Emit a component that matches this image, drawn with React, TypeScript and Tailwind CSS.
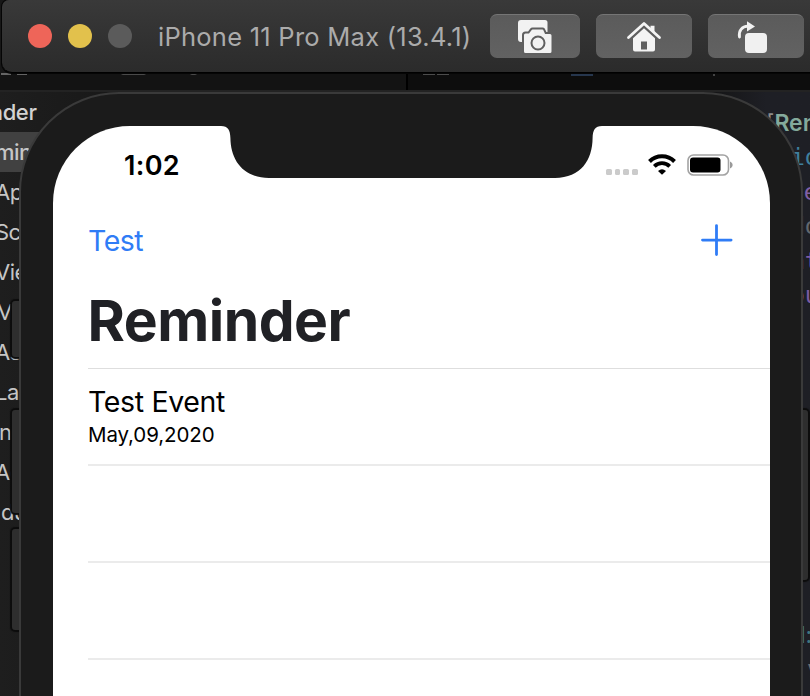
import type { ReactNode } from "react";

const files = ["Ap", "Sc", "Vie", "M", "As", "La", "n", "Ac"];

const codeLines = [
  { text: "io", style: "text-[#3f7f9f] pl-[31px]" },
  { text: "le", style: "text-[#8160a5] pl-[30px]" },
  { text: "do", style: "text-[#62676e] pl-[31px]" },
  { text: "at", style: "text-[#7d5ba3] pl-[31px]" },
  { text: "ou", style: "text-[#7d5ba3] pl-[31px]" },
];

function Editor() {
  return (
    <div className="flex h-full flex-col">
      <div className="flex h-[90px] shrink-0 items-end">
        <div className="flex h-[17px] w-[406px] bg-[#131313]">
          <div className="ml-[1px] h-[2px] w-[10px] bg-[#656565]" />
          <div className="ml-[6px] h-[2px] w-[10px] bg-[#656565]" />
          <div className="ml-[55px] h-[1px] w-[3px] bg-[#444]" />
          <div className="ml-[36px] h-[2px] w-[25px] rounded-b bg-[#4a4a4a]" />
          <div className="ml-[44px] h-[2px] w-[7px] rounded-b bg-[#4a4a4a]" />
        </div>
        <div className="h-[17px] w-[2px] bg-black" />
        <div className="flex h-[17px] flex-1 bg-[#0d0d0d]">
          <div className="ml-[15px] h-[2px] w-[12px] bg-[#4c4c4c]" />
          <div className="ml-[2px] h-[2px] w-[12px] bg-[#4c4c4c]" />
          <div className="ml-[122px] h-[3px] w-[22px] bg-[#26364d]" />
          <div className="ml-[120px] h-[3px] w-[2px] bg-[#444]" />
          <div className="ml-[17px] h-[1px] w-[29px] bg-[#51431e]" />
        </div>
      </div>
      <div className="h-[2px] shrink-0 bg-[#232323]" />
      <div className="flex flex-1 justify-between">
        <div className="w-[200px] bg-linear-to-r from-[#1e1e1e] to-[#141414] text-[22px] leading-[40px] tracking-[-0.5px] text-[#c6c6c6]">
          <div className="flex h-[40px] w-[36.5px] justify-end font-medium tracking-[-0.4px] text-[#d2d2d2]">nder</div>
          <div className="-ml-[5px] h-[40px] bg-[#414141] font-medium tracking-[-0.6px]">min</div>
          <div className="-ml-[5px]">
            {files.map((name) => (
              <div key={name} className={name === "n" ? "h-[40px] pl-[4px]" : "h-[40px]"}>{name}</div>
            ))}
          </div>
          <div className="h-[40px] pl-px">du</div>
        </div>
        <div className="flex w-[110px] flex-col overflow-hidden whitespace-nowrap bg-linear-to-r from-[#131313] to-[#1e1f25] to-60% pt-[14px] pl-[60px] font-['DejaVu_Sans_Mono',monospace] text-[23px]">
          <div className="flex h-[34px] items-center font-['Inter',sans-serif] leading-[34px]">
            <span className="w-[17px] pl-[6px] text-[#8b8b8b]">[</span>
            <span className="font-semibold text-[#84aa9c]">Ren</span>
          </div>
          {codeLines.map((line, i) => (
            <div key={i} className={`h-[34.5px] leading-[34px] ${line.style}`}>{line.text}</div>
          ))}
          <div className="mt-[305px] h-[34px] pl-[40px] font-['Inter',sans-serif] leading-[34px] text-[#3f7482]">l:</div>
          <div className="h-[34px] pl-[47px] leading-[34px] text-[#707070]">v</div>
        </div>
      </div>
    </div>
  );
}

function ToolButton({ wide, children }: { wide: boolean; children: ReactNode }) {
  return (
    <button
      className={`flex h-[44px] shrink-0 items-center justify-center rounded-[7px] border-t border-[#757575] bg-linear-to-b from-[#5b5b5b] to-[#626262] ${
        wide ? "w-[96px]" : "w-[90px]"
      }`}
    >
      {children}
    </button>
  );
}

function TitleBar() {
  return (
    <div className="flex h-[73px] items-center rounded-bl-[10px] rounded-tl-[7px] border-b border-black bg-linear-to-b from-[#393939] to-[#2b2b2b] pl-[26px] shadow-[0_0_0_1px_#050505]">
      <div className="flex gap-[16px]">
        <div className="size-[24px] rounded-full bg-[#ee6559]" />
        <div className="size-[24px] rounded-full bg-[#e2c14c]" />
        <div className="size-[24px] rounded-full bg-[#5b5b5b]" />
      </div>
      <div className="w-[358px] shrink-0 whitespace-nowrap pl-[26px] pt-[1px] text-[25.5px] leading-[32px] tracking-[0.25px] text-[#ababab]">
        iPhone 11 Pro Max (13.4.1)
      </div>
      <div className="flex gap-[16px]">
        <ToolButton wide={false}>
          <svg className="h-[36px] w-[36px]" viewBox="0 0 36 36" fill="none">
            <path d="M4 1h24a2.500 2.500 0 0 1 2.500 2.500V20a3 3 0 0 1-3 3H4a3 3 0 0 1-3-3V4a3 3 0 0 1 3-3Z" fill="#f2f2f2" />
            <path d="M8.500 13.500h3l2.400-3.100a2 2 0 0 1 1.600-.8h10a2 2 0 0 1 1.600.8l1.600 3.600H33a2.500 2.500 0 0 1 2.500 2.500v16a2.500 2.500 0 0 1-2.500 2.500H8.500A2.500 2.500 0 0 1 6 32.500V16a2.500 2.500 0 0 1 2.500-2.500Z" fill="#f2f2f2" stroke="#5f5f5f" strokeWidth="2" />
            <circle cx="21" cy="24" r="6.500" stroke="#5f5f5f" strokeWidth="2" />
          </svg>
        </ToolButton>
        <ToolButton wide>
          <svg className="h-[32px] w-[36px]" viewBox="0 0 36 32" fill="none">
            <path d="M24.500 9V4.700h4V13" fill="#f4f4f4" />
            <path d="M2.500 16.500 18 2.500l15.500 14" stroke="#f4f4f4" strokeWidth="2.800" strokeLinecap="round" strokeLinejoin="round" />
            <path fillRule="evenodd" d="M18 7.300 29 17.200v11.300a2 2 0 0 1-2 2H9a2 2 0 0 1-2-2V17.200L18 7.300Zm-3 13.200v8h6v-8h-6Z" fill="#f4f4f4" />
          </svg>
        </ToolButton>
        <ToolButton wide>
          <svg className="-ml-[8px] h-[34px] w-[32px]" viewBox="0 0 32 34" fill="none">
            <path d="M3.500 17C2.300 10.500 6 6.500 12 6.200" stroke="#f2f2f2" strokeWidth="2.800" strokeLinecap="round" />
            <path d="M11 1.200v10.400l8-5.200L11 1.200Z" fill="#f2f2f2" />
            <rect x="9" y="13" width="22" height="20" rx="4" fill="#f0f0f0" />
          </svg>
        </ToolButton>
      </div>
    </div>
  );
}

function StatusBar() {
  return (
    <div className="flex h-[52px]">
      <div className="w-[168px] shrink-0 pl-[71px] pt-[23px] text-[27px] font-semibold leading-[34px] tracking-[0.3px] text-black">
        1:02
      </div>
      <svg className="h-[52px] w-[381px] shrink-0" viewBox="0 0 381 52">
        <path d="M0 0C7 0 9.200 4 9.400 12C9.600 34 22 51.800 48 52H334C360 51.800 371.400 34 371.600 12C371.800 4 374 0 381 0Z" fill="#1b1b1b" />
      </svg>
      <div className="flex items-start pl-[4px] pt-[28px]">
        <div className="mt-[15px] flex gap-[3px]">
          {[0, 1, 2, 3].map((n) => (
            <div key={n} className="size-[5.7px] rounded-[1.5px] bg-[#cbcbcb]" />
          ))}
        </div>
        <svg className="ml-[10.5px] h-[21px] w-[28px] shrink-0" viewBox="0 0 28 21" fill="none">
          <path d="M1.500 7.500a17.500 17.500 0 0 1 25 0" stroke="#000" strokeWidth="4" />
          <path d="M6.300 12.300a11 11 0 0 1 15.400 0" stroke="#000" strokeWidth="3.800" />
          <path d="M14 20.800 10 16.900q4-3.400 8 0Z" fill="#000" />
        </svg>
        <svg className="ml-[10.5px] h-[22px] w-[47px] shrink-0" viewBox="0 0 47 22" fill="none">
          <rect x="1" y="1" width="40.500" height="20" rx="5.500" stroke="#a3a3a3" strokeWidth="1.600" />
          <rect x="3" y="3.500" width="30.500" height="15" rx="3" fill="#000" />
          <path d="M43 7.500c3.500 1.500 3.500 5.500 0 7Z" fill="#9a9a9a" />
        </svg>
      </div>
    </div>
  );
}

function Screen() {
  return (
    <div className="flex h-[571px] w-[717px] flex-col overflow-hidden rounded-t-[77px] bg-white">
      <StatusBar />
      <div className="mt-[41px] flex h-[42px] items-center justify-between pl-[35px] pr-[37px]">
        <span className="pt-[2px] text-[28.5px] leading-[40px] tracking-[-0.5px] text-[#2f7cf6]">Test</span>
        <svg className="h-[32px] w-[32px]" viewBox="0 0 32 32">
          <path d="M15.500 1.600v29M1.500 16.100h28.600" stroke="#2f7cf6" strokeWidth="2.800" strokeLinecap="round" />
        </svg>
      </div>
      <h1 className="mt-[27px] h-[80px] pl-[34.5px] pt-[1px] text-[57px] font-bold leading-[64px] tracking-[-0.5px] text-[#202125]">Reminder</h1>
      <div className="ml-[35px] flex flex-col border-t border-[#dedede]">
        <div className="flex h-[97px] flex-col border-b-2 border-[#ebebeb] pt-[15px] text-black">
          <span className="text-[28.5px] leading-[36px] tracking-[-0.35px]">Test Event</span>
          <span className="text-[20.5px] leading-[30px] tracking-[-0.1px]">May,09,2020</span>
        </div>
        <div className="h-[97px] border-b-2 border-[#ebebeb]" />
        <div className="h-[97px] border-b-2 border-[#ebebeb]" />
      </div>
    </div>
  );
}

function SideKey({ place }: { place: string }) {
  return <div className={`absolute bg-[#2e2e2e] shadow-[0_0_1px_2px_#0c0c0c] ${place}`} />;
}

export default function App() {
  return (
    <div className="relative h-[696px] w-[810px] overflow-hidden bg-[#171717] font-['Inter',sans-serif]">
      <Editor />
      <div className="absolute left-[19px] top-[92px] h-[700px] w-[784px]">
        <SideKey place="left-[-7px] top-[209px] h-[56px] w-[9px] rounded-l-[3px]" />
        <SideKey place="left-[-7px] top-[318px] h-[103px] w-[9px] rounded-l-[3px]" />
        <SideKey place="left-[-7px] top-[437px] h-[101px] w-[9px] rounded-l-[3px]" />
        <SideKey place="right-[-5px] top-[318px] h-[170px] w-[8px] rounded-r-[3px]" />
        <div className="relative h-full rounded-t-[100px] border-2 border-[#3a3a3a] bg-[#1b1b1b] pl-[32px] pt-[32px]">
          <Screen />
        </div>
      </div>
      <div className="absolute left-[2px] right-0 top-0">
        <TitleBar />
      </div>
    </div>
  );
}
